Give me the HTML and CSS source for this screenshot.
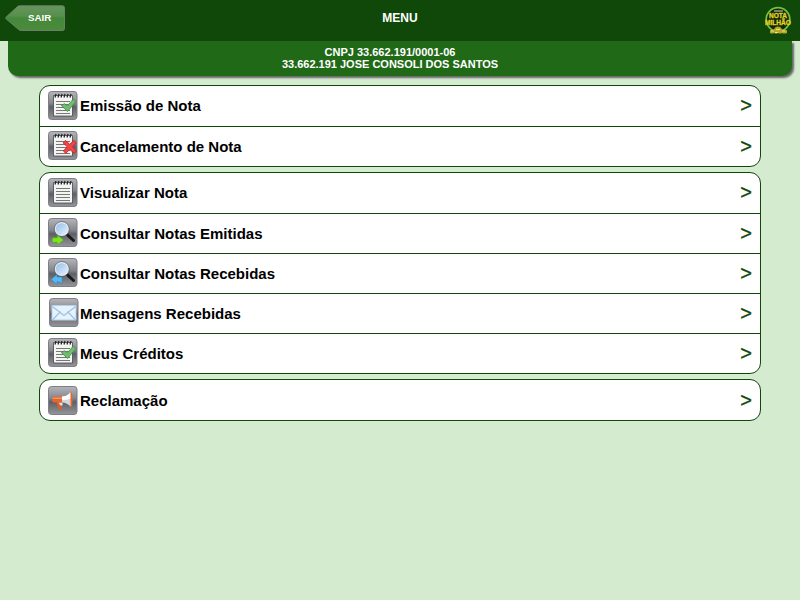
FILE: index.html
```html
<!DOCTYPE html>
<html lang="pt-BR">
<head>
<meta charset="utf-8">
<title>Menu</title>
<link rel="stylesheet" href="styles.css">
</head>
<body>
<svg class="defs" width="0" height="0" aria-hidden="true">
  <defs>
    <linearGradient id="tile" x1="0" y1="0" x2="0" y2="1">
      <stop offset="0" stop-color="#b4b6bb"/><stop offset=".42" stop-color="#85878d"/>
      <stop offset=".55" stop-color="#5d5f66"/><stop offset="1" stop-color="#94969b"/>
    </linearGradient>
    <linearGradient id="lens" x1="0" y1="0" x2="1" y2="1">
      <stop offset="0" stop-color="#8fbbe8"/><stop offset="1" stop-color="#e9f5ff"/>
    </linearGradient>
    <linearGradient id="leave" x1="0" y1="0" x2="0" y2="1">
      <stop offset="0" stop-color="#679660"/><stop offset=".4" stop-color="#56904c"/>
      <stop offset=".5" stop-color="#468839"/><stop offset="1" stop-color="#4a8b3e"/>
    </linearGradient>
    <symbol id="base" viewBox="0 0 30 30">
      <rect x=".5" y=".5" width="28.5" height="28" rx="3" fill="url(#tile)" stroke="#7d7f85"/>
    </symbol>
    <symbol id="pad" viewBox="0 0 30 30">
      <use href="#base"/>
      <path d="M5.500 4.500h19v20.500h-19z" fill="#f4f4f2" stroke="#44464b" stroke-width=".8"/>
      <path d="M7 6.500l1-3.500M10 6.500l1-3.500M13 6.500l1-3.500M16 6.500l1-3.500M19 6.500l1-3.500M22 6.500l1-3.500" stroke="#222" stroke-width="1.200"/>
      <path d="M8 10.500h14M8 13.500h14M8 16.500h14M8 19.500h14M8 22.500h14" stroke="#777" stroke-width="1"/>
    </symbol>
    <symbol id="check" viewBox="0 0 30 30">
      <use href="#pad"/>
      <path d="M13.300 14.500l3.200-1.800 2.800 2.300L25.300 8l2.600 2.500L19.500 20.500z" fill="#6fbd6d" stroke="#3c8c44" stroke-width=".8" stroke-linejoin="round"/>
    </symbol>
    <symbol id="cross" viewBox="0 0 30 30">
      <use href="#pad"/>
      <path d="M17.500 9.500l4.300 3.800 4-3.800 2.500 2.300-3.800 4 4 4.200-2.500 2.300-4.200-3.900-4 3.900-2.500-2.300 4-4.200-4.300-4z" fill="#f04646" stroke="#c2242a" stroke-width=".9" stroke-linejoin="round"/>
    </symbol>
    <symbol id="glass" viewBox="0 0 30 30">
      <use href="#base"/>
      <path d="M19 16.500l6.500 6" stroke="#19191b" stroke-width="3" stroke-linecap="round"/>
      <circle cx="13.800" cy="11" r="6.600" fill="url(#lens)" stroke="#e4e8ee" stroke-width="1.500"/>
      <circle cx="13.800" cy="11" r="7.500" fill="none" stroke="#4c5360" stroke-width=".6"/>
    </symbol>
    <symbol id="sent" viewBox="0 0 30 30">
      <use href="#glass"/>
      <path d="M4.300 19.800h5v-2.800l6.200 5-6.200 5v-2.800h-5z" fill="#7be61e" stroke="#4ba80c" stroke-width=".5"/>
    </symbol>
    <symbol id="received" viewBox="0 0 30 30">
      <use href="#glass"/>
      <path d="M14 19h-5v-2.500l-6 5 6 5v-2.800q3 0 5 1.800z" fill="#55b9f5" stroke="#2385c6" stroke-width=".5"/>
    </symbol>
    <symbol id="mail" viewBox="0 0 30 30">
      <use href="#base"/>
      <path d="M3 7.500h24v14.500H3z" fill="#e6f2fc" stroke="#b4d1ec"/>
      <path d="M3.500 22l8-8.500M26.500 22l-8-8.500M3.500 8.500l11.500 9 11.500-9" fill="none" stroke="#9cc2e6" stroke-width="1.200"/>
    </symbol>
    <symbol id="horn" viewBox="0 0 30 30">
      <use href="#base"/>
      <path d="M8.500 16l2 7.500h3.500l-1-7.500z" fill="#d95f2e"/>
      <path d="M10.500 16.500h4v3h-2z" fill="#e4e4e6"/>
      <path d="M5 10.500h9v6H5q-1.500-3 0-6z" fill="#e5652c"/>
      <path d="M5 11.500h9v1.500H4.500z" fill="#f49462"/>
      <path d="M14 10.500q5 0 9-4.500v15q-4-4.500-9-4.500z" fill="#d5d5d9"/>
      <path d="M14 10.500q5 0 9-4.500v6.500q-4 1.500-9 1.500z" fill="#fff"/>
      <path d="M22.500 5.500q2 0 2 7.800t-2 8.200z" fill="#e5652c"/>
    </symbol>
  </defs>
</svg>
<header class="bar">
  <a class="leave"><svg class="leave-shape" viewBox="0 0 61 28"><path d="M14.500 .8H57.500q2 0 2 2V23.500q0 2-2 2H16.500q-2 0-3-1L1.200 14q-1-1 0-2L12 2q1-1.200 2.500-1.200z" fill="url(#leave)" stroke="#6b7f66" stroke-width="1"/></svg><span class="leave-text">SAIR</span></a>
  <h1 class="title">MENU</h1>
  <svg class="logo" viewBox="0 0 34 32">
    <circle cx="17" cy="13.500" r="11.800" fill="#122a0a" stroke="#74c244" stroke-width="1.700"/>
    <path d="M13 5h9" stroke="#b9bba8" stroke-width="1.200"/>
    <text x="8" y="11.800" class="logo-text" textLength="18" lengthAdjust="spacingAndGlyphs">NOTA</text>
    <text x="4" y="19.200" class="logo-text" textLength="26" lengthAdjust="spacingAndGlyphs">MILHÃO</text>
    <path d="M9 24.500q2-2 4-1 1-3 4-3t4 3q3-1 5 1v2.500q-3 1-5 0-2 1-4 0-2 1-4 0-2 1-4 0z" fill="#b5a62c"/>
    <path d="M10 25h3M15 23.500h4M21 25h3M14 26.500h3" stroke="#ece272"/>
  </svg>
</header>
<div class="company">CNPJ 33.662.191/0001-06<br>33.662.191 JOSE CONSOLI DOS SANTOS</div>
<main class="menu">
  <ul class="group">
    <li class="row"><svg class="icon"><use href="#check"/></svg><span class="label">Emissão de Nota</span><span class="arrow">&gt;</span></li>
    <li class="row"><svg class="icon"><use href="#cross"/></svg><span class="label">Cancelamento de Nota</span><span class="arrow">&gt;</span></li>
  </ul>
  <ul class="group">
    <li class="row"><svg class="icon"><use href="#pad"/></svg><span class="label">Visualizar Nota</span><span class="arrow">&gt;</span></li>
    <li class="row"><svg class="icon"><use href="#sent"/></svg><span class="label">Consultar Notas Emitidas</span><span class="arrow">&gt;</span></li>
    <li class="row"><svg class="icon"><use href="#received"/></svg><span class="label">Consultar Notas Recebidas</span><span class="arrow">&gt;</span></li>
    <li class="row"><svg class="icon icon-mail"><use href="#mail"/></svg><span class="label">Mensagens Recebidas</span><span class="arrow">&gt;</span></li>
    <li class="row"><svg class="icon"><use href="#check"/></svg><span class="label">Meus Créditos</span><span class="arrow">&gt;</span></li>
  </ul>
  <ul class="group">
    <li class="row"><svg class="icon"><use href="#horn"/></svg><span class="label">Reclamação</span><span class="arrow">&gt;</span></li>
  </ul>
</main>
</body>
</html>
```
FILE: styles.css
```css
* { box-sizing: border-box; }
body {
  margin: 0;
  min-height: 600px;
  background: #d4ebd0;
  font-family: "Liberation Sans", Arial, sans-serif;
  font-weight: bold;
  color: #000;
}
.defs { position: absolute; }
.bar {
  display: grid;
  grid-template-columns: 80px 1fr 80px;
  height: 41px;
  background: #10480a;
  color: #fff;
}
.leave { display: grid; margin: 5px 0 0 5px; width: 61px; height: 28px; }
.leave-shape { grid-area: 1 / 1; width: 61px; height: 28px; }
.leave-text { grid-area: 1 / 1; padding-left: 23px; font-size: 9.8px; line-height: 25px; }
.title { margin: 0; font-size: 12px; line-height: 36px; text-align: center; }
.logo { width: 34px; height: 32px; margin: 6px 0 0 41px; overflow: visible; }
.logo-text { font-size: 6.5px; fill: #f0e02a; stroke: #d8c020; stroke-width: .3px; }
.company {
  height: 35px;
  margin: 0 8px;
  padding: 5px 20px 0 0;
  border-radius: 0 0 10px 10px;
  background: #206916;
  box-shadow: 2px 2px 2px #666;
  clip-path: inset(0 -8px -8px 0);
  color: #fff;
  font-size: 11px;
  line-height: 12px;
  text-align: center;
}
.menu { display: flex; flex-direction: column; gap: 5px; margin: 9px 39px 0; }
.group {
  margin: 0;
  padding: 0;
  list-style: none;
  background: #fff;
  border: 1px solid #10480a;
  border-radius: 11px;
}
.row { display: flex; align-items: flex-start; height: 40px; padding: 4px 8px 0; border-top: 1px solid #10480a; }
.row:first-child { border-top: 0; padding-top: 5px; }
.icon { width: 30px; height: 30px; }
.icon-mail { margin: 0 -1px 0 1px; }
.label { flex: 1; padding-left: 2px; font-size: 15px; line-height: 32px; }
.row:first-child .label { line-height: 30px; }
.arrow {
  color: #10480a;
  font-size: 20px;
  font-weight: normal;
  line-height: 30px;
  -webkit-text-stroke: .3px #10480a;
}
.row:first-child .arrow { line-height: 28px; }
.group:last-child .row { padding-top: 6px; }
```
